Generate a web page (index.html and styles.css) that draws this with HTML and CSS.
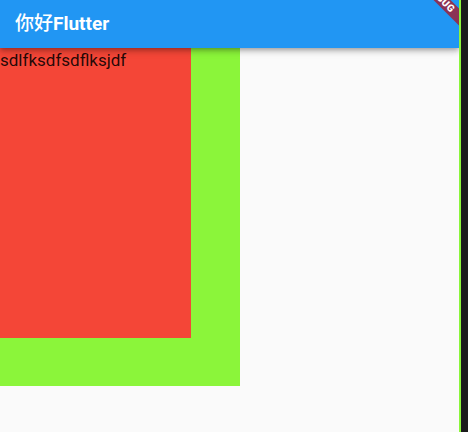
FILE: index.html
```html
<!DOCTYPE html>
<html>
<head>
<meta charset="utf-8">
<link rel="stylesheet" href="styles.css">
</head>
<body>
<div class="frame">
  <div class="app">
    <header class="appbar"><span class="title"><span class="cjk">你好</span>Flutter</span></header>
    <main class="content">
      <div class="outer">
        <div class="inner"><span class="label">sdlfksdfsdflksjdf</span></div>
      </div>
    </main>
    <div class="banner"><span>DEBUG</span></div>
  </div>
  <div class="edge"></div>
  <div class="dark"></div>
</div>
</body>
</html>
```
FILE: styles.css
```css
html, body {
  margin: 0;
  padding: 0;
  background: #1b1b1b;
}
.frame {
  display: flex;
  width: 468px;
  height: 432px;
}
.app {
  position: relative;
  width: 459px;
  height: 432px;
  background: #fafafa;
  overflow: hidden;
  display: flex;
  flex-direction: column;
  font-family: Roboto, "Noto Sans CJK SC", sans-serif;
}
.appbar {
  position: relative;
  z-index: 1;
  height: 48px;
  flex: none;
  background: #2196f3;
  display: flex;
  align-items: center;
  padding-left: 15px;
  box-shadow: 0 2px 4px -1px rgba(0,0,0,0.2), 0 4px 5px 0 rgba(0,0,0,0.14), 0 1px 10px 0 rgba(0,0,0,0.12);
}
.title {
  color: #fff;
  font-size: 19px;
  font-weight: 700;
  line-height: 24px;
}
.cjk {
  font-weight: 500;
}
.content {
  flex: 1;
  display: flex;
  align-items: flex-start;
}
.outer {
  width: 240px;
  height: 338px;
  background: #8bf53a;
}
.inner {
  width: 191px;
  height: 290px;
  background: #f44637;
  padding-top: 2px;
  box-sizing: border-box;
}
.label {
  font-size: 17px;
  color: rgba(0,0,0,0.87);
  line-height: 20px;
  display: block;
}
.banner {
  position: absolute;
  left: 401px;
  top: -7px;
  width: 80px;
  height: 12px;
  transform: rotate(45deg);
  background: #8b3255;
  display: flex;
  align-items: center;
  justify-content: center;
  z-index: 2;
}
.banner span {
  color: #fff;
  font-family: Roboto, sans-serif;
  font-weight: 900;
  font-size: 10px;
  line-height: 1;
  letter-spacing: 0.3px;
}
.edge {
  width: 2px;
  height: 432px;
  background: #8bf53a;
}
.dark {
  flex: 1;
  background: #1b1b1b;
}
```
